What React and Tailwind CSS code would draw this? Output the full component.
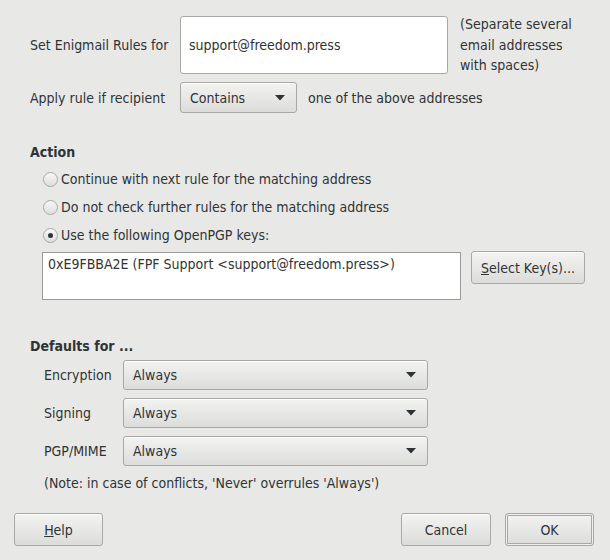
import React from "react";

function Arrow() {
  return (
    <svg width="10" height="6" viewBox="0 0 10 6" className="shrink-0">
      <path d="M0 0 L10 0 L5 5.5 Z" fill="#2e3436" />
    </svg>
  );
}

function Combo({ value, className }) {
  return (
    <div
      className={`flex items-center justify-between rounded-[3px] border border-[#a8a8a6] bg-gradient-to-b from-[#f3f3f2] to-[#dcdcdb] pl-[9px] pr-[11px] shadow-[inset_0_1px_0_#fff] ${className}`}
    >
      <span>{value}</span>
      <Arrow />
    </div>
  );
}

function Radio({ checked, label }) {
  return (
    <div className="flex h-[28px] items-center">
      <div className="flex h-[15px] w-[15px] items-center justify-center rounded-full border border-[#a8a8a6] bg-gradient-to-b from-[#f7f7f7] to-[#dedede]">
        {checked && <div className="h-[5px] w-[5px] rounded-full bg-[#2e3436]" />}
      </div>
      <span className="ml-[3px]">{label}</span>
    </div>
  );
}

function Button({ children, className, isDefault }) {
  return (
    <div
      className={`flex h-[33px] items-center justify-center rounded-[3px] border border-[#a8a8a6] bg-gradient-to-b from-[#f3f3f2] to-[#dcdcdb] ${
        isDefault ? "shadow-[inset_0_0_0_1px_#f0f0f0,inset_0_0_0_2px_#a8a8a6]" : "shadow-[inset_0_1px_0_#fff]"
      } ${className}`}
    >
      {children}
    </div>
  );
}

export default function App() {
  return (
    <div
      className="flex h-[560px] w-[610px] flex-col bg-[#e8e8e7] text-[14px] leading-[18px] text-[#2e3436]"
      style={{ fontFamily: "'DejaVu Sans Condensed', 'DejaVu Sans', sans-serif" }}
    >
      {/* rule target */}
      <div className="mt-[16px] flex h-[58px] pl-[30px]">
        <div className="flex w-[150px] items-center">Set Enigmail Rules for</div>
        <div className="flex h-[58px] w-[268px] items-center rounded-[3px] border border-[#a8a8a6] bg-white px-[8px]">
          support@freedom.press
        </div>
        <div className="-mt-[2px] ml-[12px] leading-[20.5px]">
          (Separate several
          <br />
          email addresses
          <br />
          with spaces)
        </div>
      </div>

      <div className="mt-[8px] flex items-center pl-[30px]">
        <div className="w-[150px]">Apply rule if recipient</div>
        <Combo value="Contains" className="h-[31px] w-[117px]" />
        <span className="ml-[11px]">one of the above addresses</span>
      </div>

      {/* action */}
      <div className="mt-[30px] pl-[30px] font-bold">Action</div>
      <div className="mt-[4px] flex flex-col pl-[43px]">
        <Radio label="Continue with next rule for the matching address" />
        <Radio label="Do not check further rules for the matching address" />
        <Radio checked label="Use the following OpenPGP keys:" />
      </div>
      <div className="mt-[3px] flex items-start pl-[42px]">
        <div className="h-[48px] w-[419px] border border-[#9a9a98] bg-white px-[5px] pt-[2px]">
          0xE9FBBA2E (FPF Support &lt;support@freedom.press&gt;)
        </div>
        <Button className="-mt-[1px] ml-[10px] w-[114px]">
          <span>
            <span className="underline">S</span>elect Key(s)...
          </span>
        </Button>
      </div>

      {/* defaults */}
      <div className="mt-[37px] pl-[30px] font-bold">Defaults for ...</div>
      <div className="mt-[5px] flex flex-col gap-[8px] pl-[44px]">
        {["Encryption", "Signing", "PGP/MIME"].map((label) => (
          <div key={label} className="flex items-center">
            <div className="w-[79px]">{label}</div>
            <Combo value="Always" className="h-[30px] w-[305px]" />
          </div>
        ))}
      </div>
      <div className="mt-[8px] pl-[44px]">(Note: in case of conflicts, 'Never' overrules 'Always')</div>

      {/* buttons */}
      <div className="mt-auto mb-[14px] flex items-center pl-[14px] pr-[16px]">
        <Button className="w-[89px]">
          <span>
            <span className="underline">H</span>elp
          </span>
        </Button>
        <div className="flex-1" />
        <Button className="w-[90px]">Cancel</Button>
        <Button isDefault className="ml-[14px] w-[89px]">
          OK
        </Button>
      </div>
    </div>
  );
}
